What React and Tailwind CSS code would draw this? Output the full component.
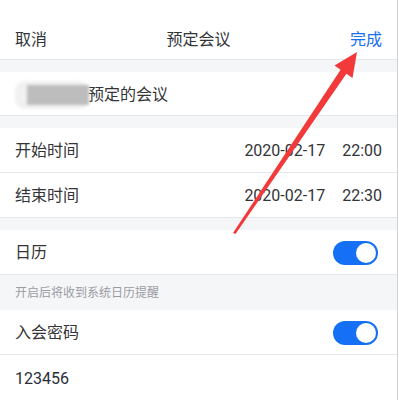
import React from 'react';

function Toggle() {
  return (
    <div className="w-[45px] h-[24px] rounded-full bg-[#1570f6] p-[2px] flex justify-end">
      <div className="w-[20px] h-[20px] rounded-full bg-white" />
    </div>
  );
}

function Row({ children, border = true, className = '' }) {
  return (
    <div
      className={`h-[45px] flex items-center justify-between px-[15px] pt-[2px] bg-white ${
        border ? 'border-b border-[#e6e7ea]' : ''
      } ${className}`}
    >
      {children}
    </div>
  );
}

function Gap() {
  return <div className="h-[12px] bg-[#f5f6f8]" />;
}

export default function App() {
  return (
    <div
      className="relative w-[399px] h-[400px] overflow-hidden bg-white flex text-[16px] text-[#333438]"
      style={{ fontFamily: 'Roboto, "Noto Sans CJK SC", sans-serif' }}
    >
      <div className="w-[397px] flex flex-col">
        {/* header */}
        <div className="h-[60px] flex items-end justify-between px-[15px] pb-[9px] border-b border-[#e6e7ea] leading-[20px]">
          <span>取消</span>
          <span>预定会议</span>
          <span className="text-[#1a6ef0]">完成</span>
        </div>
        <Gap />
        <Row className="px-[8px]">
          <div className="flex items-center">
            <div className="w-[74px] h-[28px] rounded-[10px] bg-[#f1f1f1] blur-[1.5px] flex items-center justify-end">
              <div className="w-[62px] h-[20px] bg-[#bdbdbd]" />
            </div>
            <span className="-ml-[1px]">预定的会议</span>
          </div>
        </Row>
        <Gap />
        <Row>
          <span>开始时间</span>
          <span className="flex gap-[17px]">
            <span>2020-02-17</span>
            <span>22:00</span>
          </span>
        </Row>
        <Row>
          <span>结束时间</span>
          <span className="flex gap-[17px]">
            <span>2020-02-17</span>
            <span>22:30</span>
          </span>
        </Row>
        <Gap />
        <Row className="pr-[19px]">
          <span>日历</span>
          <Toggle />
        </Row>
        <div className="h-[36px] bg-[#f5f6f8] px-[15px] flex items-center text-[12px] text-[#9a9ca2]">
          开启后将收到系统日历提醒
        </div>
        <Row className="pr-[19px]">
          <span>入会密码</span>
          <Toggle />
        </Row>
        <Row border={false}>
          <span className="text-[#2a2e3a]">123456</span>
        </Row>
      </div>
      <div className="w-[1px] bg-[#d2d2d2]" />
      <div className="w-[1px] bg-white" />

      {/* red annotation arrow */}
      <svg className="absolute left-0 top-0" width="399" height="400" viewBox="0 0 399 400">
        <polygon
          points="233,233 340.6,69.8 334.5,65.5 357,52 352.5,78 346.4,73.8 235.5,234"
          fill="#f23a3a"
        />
      </svg>
    </div>
  );
}
